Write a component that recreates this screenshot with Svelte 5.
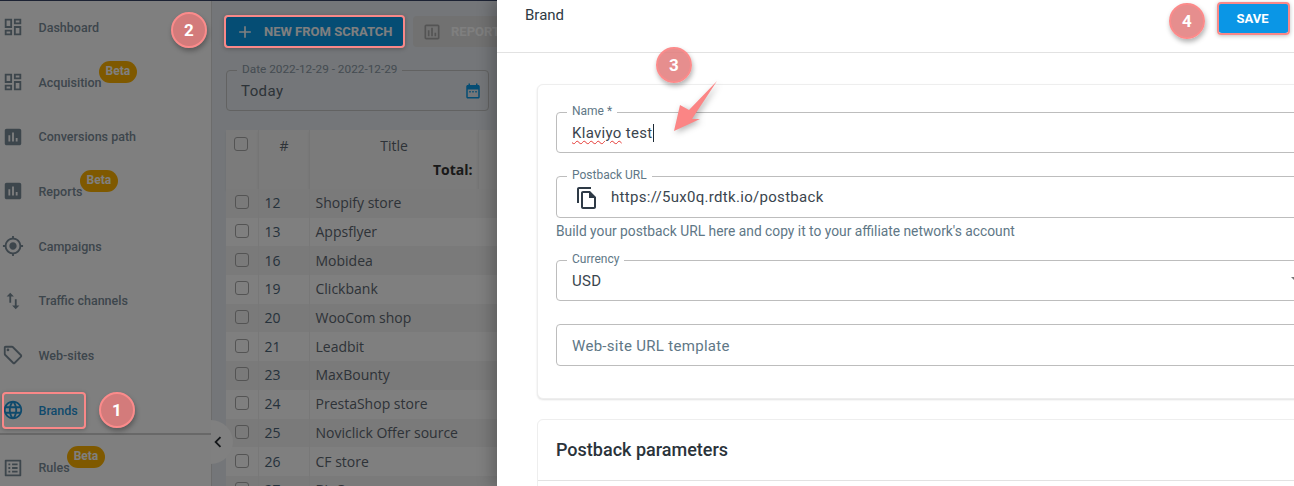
<script lang="ts">
	const icons = {
		dashboard:
			'M19 5v2h-4V5h4M9 5v6H5V5h4m10 8v6h-4v-6h4M9 17v2H5v-2h4M21 3h-8v6h8V3zM11 3H3v10h8V3zm10 8h-8v10h8V11zm-10 4H3v6h8v-6z',
		assessment:
			'M19 3H5c-1.1 0-2 .9-2 2v14c0 1.1.9 2 2 2h14c1.1 0 2-.9 2-2V5c0-1.1-.9-2-2-2zM9 17H7v-7h2v7zm4 0h-2V7h2v10zm4 0h-2v-4h2v4z',
		gps: 'M12 8c-2.21 0-4 1.79-4 4s1.79 4 4 4 4-1.79 4-4-1.79-4-4-4zm8.94 3c-.46-4.17-3.77-7.48-7.94-7.94V1h-2v2.06C6.83 3.52 3.52 6.83 3.06 11H1v2h2.06c.46 4.17 3.77 7.48 7.94 7.94V23h2v-2.06c4.17-.46 7.48-3.77 7.94-7.94H23v-2h-2.06zM12 19c-3.87 0-7-3.13-7-7s3.13-7 7-7 7 3.13 7 7-3.13 7-7 7z',
		swap: 'M16 17.01V10h-2v7.01h-3L15 21l4-3.99h-3zM9 3L5 6.99h3V14h2V6.99h3L9 3z',
		tag: 'M21.41 11.58l-9-9C12.05 2.22 11.55 2 11 2H4c-1.1 0-2 .9-2 2v7c0 .55.22 1.05.59 1.42l9 9c.36.36.86.58 1.41.58s1.05-.22 1.41-.59l7-7c.37-.36.59-.86.59-1.41s-.23-1.06-.59-1.42zM13 20.01L4 11V4h7v-.01l9 9-7 7.02zM6.5 5A1.5 1.5 0 1 0 6.5 8 1.5 1.5 0 1 0 6.5 5z',
		globe:
			'M11.99 2C6.47 2 2 6.48 2 12s4.47 10 9.99 10C17.52 22 22 17.52 22 12S17.52 2 11.99 2zm6.93 6h-2.95c-.32-1.25-.78-2.45-1.38-3.56 1.84.63 3.37 1.91 4.33 3.56zM12 4.04c.83 1.2 1.48 2.53 1.91 3.96h-3.82c.43-1.43 1.08-2.76 1.91-3.96zM4.26 14C4.1 13.36 4 12.69 4 12s.1-1.36.26-2h3.38c-.08.66-.14 1.32-.14 2 0 .68.06 1.34.14 2H4.26zm.82 2h2.95c.32 1.25.78 2.45 1.38 3.56-1.84-.63-3.37-1.9-4.33-3.56zm2.95-8H5.08c.96-1.66 2.49-2.93 4.33-3.56C8.81 5.55 8.35 6.75 8.03 8zM12 19.96c-.83-1.2-1.48-2.53-1.91-3.96h3.82c-.43 1.43-1.08 2.76-1.91 3.96zM14.34 14H9.66c-.09-.66-.16-1.32-.16-2 0-.68.07-1.35.16-2h4.68c.09.65.16 1.32.16 2 0 .68-.07 1.34-.16 2zm.25 5.56c.6-1.11 1.06-2.31 1.38-3.56h2.95c-.96 1.65-2.49 2.93-4.33 3.56zM16.36 14c.08-.66.14-1.32.14-2 0-.68-.06-1.34-.14-2h3.38c.16.64.26 1.31.26 2s-.1 1.36-.26 2h-3.38z',
		list: 'M19 5v14H5V5h14m1.1-2H3.9c-.5 0-.9.4-.9.9v16.2c0 .4.4.9.9.9h16.2c.4 0 .9-.5.9-.9V3.9c0-.5-.5-.9-.9-.9zM11 7h6v2h-6V7zm0 4h6v2h-6v-2zm0 4h6v2h-6zM7 7h2v2H7zm0 4h2v2H7zm0 4h2v2H7z',
		copy: 'M16 1H4c-1.1 0-2 .9-2 2v14h2V3h12V1zm-1 4H8c-1.1 0-2 .9-2 2v14c0 1.1.9 2 2 2h11c1.1 0 2-.9 2-2V11l-6-6zM8 21V7h6v5h5v9H8z',
		calendar:
			'M19 4h-1V2h-2v2H8V2H6v2H5c-1.11 0-2 .9-2 2v14c0 1.1.89 2 2 2h14c1.1 0 2-.9 2-2V6c0-1.1-.9-2-2-2zm0 16H5V10h14v10zM7 12h2v2H7zm4 0h2v2h-2zm4 0h2v2h-2z',
		add: 'M19 13h-6v6h-2v-6H5v-2h6V5h2v6h6v2z',
		report:
			'M19 3H5c-1.1 0-2 .9-2 2v14c0 1.1.9 2 2 2h14c1.1 0 2-.9 2-2V5c0-1.1-.9-2-2-2zm0 16H5V5h14v14zM7 10h2v7H7zm4-3h2v10h-2zm4 6h2v4h-2z',
		chevron: 'M15.41 7.41L14 6l-6 6 6 6 1.41-1.41L10.83 12z'
	};

	const navItems = [
		{ label: 'Dashboard', icon: icons.dashboard },
		{ label: 'Acquisition', icon: icons.dashboard, beta: true },
		{ label: 'Conversions path', icon: icons.assessment },
		{ label: 'Reports', icon: icons.assessment, beta: true },
		{ label: 'Campaigns', icon: icons.gps },
		{ label: 'Traffic channels', icon: icons.swap },
		{ label: 'Web-sites', icon: icons.tag },
		{ label: 'Brands', icon: icons.globe, active: true },
		{ label: 'Rules', icon: icons.list, beta: true }
	];

	const rows = [
		[12, 'Shopify store'],
		[13, 'Appsflyer'],
		[16, 'Mobidea'],
		[19, 'Clickbank'],
		[20, 'WooCom shop'],
		[21, 'Leadbit'],
		[23, 'MaxBounty'],
		[24, 'PrestaShop store'],
		[25, 'Noviclick Offer source'],
		[26, 'CF store'],
		[27, 'BigCommerce']
	];

	const badges = [
		{ n: 1, cls: 'b1' },
		{ n: 2, cls: 'b2' },
		{ n: 3, cls: 'b3' },
		{ n: 4, cls: 'b4' }
	];
</script>

{#snippet icon(d, cls = '')}
	<svg class="icon {cls}" viewBox="0 0 24 24" aria-hidden="true"><path {d} /></svg>
{/snippet}

<div class="page">
	<aside class="sidebar">
		{#each navItems as item}
			<div class="nav-item" class:active={item.active}>
				{@render icon(item.icon, 'nav-icon')}
				<span class="nav-label">
					{item.label}
					{#if item.beta}<span class="beta">Beta</span>{/if}
				</span>
			</div>
		{/each}
	</aside>

	<main class="main">
		<div class="toolbar">
			<button class="btn btn-primary">{@render icon(icons.add, 'btn-icon')}New from scratch</button>
			<button class="btn btn-disabled">{@render icon(icons.report, 'btn-icon')}Reports</button>
		</div>

		<fieldset class="date-field">
			<legend>Date 2022-12-29 - 2022-12-29</legend>
			<span class="date-value">Today</span>
			{@render icon(icons.calendar, 'date-icon')}
		</fieldset>

		<table class="grid">
			<thead>
				<tr>
					<th class="col-check"><span class="check"></span></th>
					<th class="col-id">#</th>
					<th class="col-title">
						<div>Title</div>
						<div class="total">Total:</div>
					</th>
					<th></th>
				</tr>
			</thead>
			<tbody>
				{#each rows as [id, title]}
					<tr>
						<td class="col-check"><span class="check"></span></td>
						<td class="col-id-val">{id}</td>
						<td>{title}</td>
						<td></td>
					</tr>
				{/each}
			</tbody>
		</table>
	</main>

	<div class="scrim"></div>

	<button class="collapse">{@render icon(icons.chevron, 'collapse-icon')}</button>

	<section class="drawer">
		<header class="drawer-head">
			<span class="drawer-title">Brand</span>
			<button class="save">Save</button>
		</header>

		<div class="drawer-body">
			<div class="card form-card">
				<fieldset class="field">
					<legend>Name *</legend>
					<span class="value"><span class="misspelt">Klaviyo</span> test<span class="caret"></span></span>
				</fieldset>

				<fieldset class="field url-field">
					<legend>Postback URL</legend>
					{@render icon(icons.copy, 'copy-icon')}
					<span class="value url">https://5ux0q.rdtk.io/postback</span>
				</fieldset>
				<p class="helper">Build your postback URL here and copy it to your affiliate network's account</p>

				<fieldset class="field">
					<legend>Currency</legend>
					<span class="value">USD</span>
					<span class="select-arrow"></span>
				</fieldset>

				<div class="field plain">Web-site URL template</div>
			</div>

			<div class="card params-card">
				<h2>Postback parameters</h2>
			</div>
		</div>
	</section>

	<!-- annotations drawn on top of the screenshot -->
	<div class="mark mark-brands"></div>
	<div class="mark mark-new"></div>
	<div class="mark mark-save"></div>
	{#each badges as b}
		<div class="badge {b.cls}">{b.n}</div>
	{/each}
	<svg class="arrow" viewBox="0 0 60 60" aria-hidden="true">
		<polygon points="50,3 22,32 13,27 7,53 33,41 25,41" />
	</svg>
</div>

<style>
	:global(body) {
		margin: 0;
		font-family: Roboto, 'Liberation Sans', sans-serif;
		background: #fff;
	}

	.page {
		position: relative;
		display: flex;
		width: 1294px;
		height: 486px;
		overflow: hidden;
		background: #e8edf2;
	}

	.icon {
		display: block;
		fill: currentColor;
		flex-shrink: 0;
	}

	/* sidebar */
	.sidebar {
		width: 211px;
		flex-shrink: 0;
		background: #fff;
		border-right: 1px solid #d8d8d8;
		box-sizing: content-box;
	}

	.nav-item {
		position: relative;
		display: flex;
		align-items: center;
		height: 54.7px;
		padding-left: 2px;
		color: #7b8c99;
		font-size: 12.5px;
		font-weight: 500;
	}

	.nav-item:last-child {
		padding-top: 3px;
	}

	:global(.nav-icon) {
		width: 22px;
		height: 22px;
		margin-right: 14.5px;
	}

	.nav-item.active {
		color: #1f94d8;
	}

	.nav-item.active::after {
		content: '';
		position: absolute;
		left: 0;
		right: 0;
		bottom: 3px;
		height: 2px;
		background: #d0d0d0;
	}

	.nav-label {
		position: relative;
	}

	.beta {
		position: absolute;
		left: 100%;
		top: -14px;
		margin-left: -3px;
		padding: 0 7px;
		height: 22px;
		line-height: 21px;
		border-radius: 11px;
		background: #ffb300;
		color: #fff;
		font-weight: 700;
		font-size: 12px;
	}

	/* dimmed main area */
	.main {
		flex: 1;
		padding: 16px 14px 0;
		min-width: 0;
	}

	.toolbar {
		display: flex;
		gap: 9px;
		height: 31px;
	}

	.btn {
		display: flex;
		align-items: center;
		height: 31px;
		padding: 0 9px;
		border: 0;
		border-radius: 4px;
		font-family: inherit;
		font-size: 13px;
		font-weight: 700;
		text-transform: uppercase;
		white-space: nowrap;
	}

	:global(.btn-icon) {
		width: 20px;
		height: 20px;
		margin-right: 9px;
	}

	.btn-primary {
		width: 178px;
		background: #0a9ae8;
		color: #fff;
		flex-shrink: 0;
	}

	.btn-disabled {
		width: 150px;
		background: #e2e2e2;
		color: #fff;
		flex-shrink: 0;
	}

	.btn-disabled :global(.btn-icon) {
		color: #a8a8a8;
	}

	.date-field {
		position: relative;
		display: flex;
		align-items: center;
		box-sizing: border-box;
		width: 263px;
		height: 47px;
		margin: 17px 0 0;
		padding: 0 14px;
		border: 1px solid #c4c4c4;
		border-radius: 4px;
		font-size: 15px;
		color: #5a6670;
	}

	.date-field legend {
		position: relative;
		top: -1px;
		padding: 0 5px;
		margin-left: -4px;
		font-size: 11.8px;
		line-height: 12px;
		color: #8a98a4;
	}

	.date-value {
		letter-spacing: 0.4px;
		margin-top: -5px;
	}

	:global(.date-icon) {
		position: absolute;
		right: 6px;
		top: 6px;
		width: 18px;
		height: 18px;
		color: #0a9ae8;
	}

	.grid {
		margin-top: 19px;
		border-collapse: collapse;
		table-layout: fixed;
		width: 400px;
		font-family: 'Open Sans', sans-serif;
		font-size: 14px;
		color: #5c6670;
		background: #fff;
	}

	.grid th {
		height: 59px;
		box-sizing: border-box;
		vertical-align: top;
		padding: 6px 5px 0 6px;
		font-weight: 400;
		background: #f6f6f6;
		border-right: 1px solid #eaeaea;
		box-shadow: 0 2px 2px rgba(0, 0, 0, 0.08);
	}

	.col-check {
		width: 32px;
	}

	.col-id {
		width: 51px;
	}

	.col-title {
		width: 169px;
	}

	.total {
		margin-top: 5px;
		text-align: right;
		font-weight: 700;
		color: #333;
	}

	.grid td {
		height: 28.7px;
		box-sizing: border-box;
		padding: 0 6px;
		line-height: 18px;
		white-space: nowrap;
	}

	.grid td:nth-child(-n + 2) {
		border-right: 1px solid #f0f0f0;
	}

	.grid td.col-check {
		padding: 0 9px;
	}

	.grid td.col-id-val {
		padding-left: 6px;
		color: #4c6478;
	}

	.grid tbody tr:nth-child(odd) {
		background: #f4f4f4;
	}

	.check {
		display: block;
		width: 14px;
		height: 14px;
		box-sizing: border-box;
		border: 1.5px solid #a8a8a8;
		border-radius: 3px;
		margin: 1px 0 0 2px;
	}

	.grid td .check {
		margin: -2px 0 0;
	}

	.scrim {
		position: absolute;
		inset: 0;
		border-top: 1px solid #1c2233;
		background: rgba(0, 0, 0, 0.5);
	}

	.collapse {
		position: absolute;
		left: 211px;
		top: 420px;
		width: 22px;
		height: 44px;
		padding: 0;
		border: 0;
		border-radius: 0 22px 22px 0;
		background: #808080;
		color: #15181b;
	}

	:global(.collapse-icon) {
		width: 22px;
		height: 22px;
		margin-left: -4px;
	}

	/* drawer */
	.drawer {
		position: absolute;
		left: 497px;
		top: 0;
		width: 900px;
		height: 486px;
		background: #fff;
		box-shadow: -6px 0 14px rgba(0, 0, 0, 0.22);
		color: #2f3a43;
	}

	.drawer-head {
		display: flex;
		align-items: center;
		justify-content: space-between;
		box-sizing: border-box;
		height: 53px;
		padding: 0 28px;
		border-bottom: 1px solid #e2e2e2;
	}

	.drawer-title {
		font-size: 15px;
		margin-top: -22px;
	}

	.save {
		position: absolute;
		left: 721px;
		top: 3px;
		width: 71px;
		height: 30px;
		padding: 0 2px 0 0;
		border: 0;
		border-radius: 4px;
		background: #0a96e6;
		color: #fff;
		font-family: inherit;
		font-size: 13px;
		font-weight: 700;
		text-transform: uppercase;
	}

	.drawer-body {
		padding: 31px 0 0 40px;
	}

	.card {
		width: 800px;
		box-sizing: border-box;
		border: 1px solid #eee;
		border-radius: 6px;
		background: #fff;
	}

	.form-card {
		height: 315px;
		padding: 21px 18px 0;
		box-shadow: 0 1px 2px rgba(0, 0, 0, 0.12);
	}

	.field {
		position: relative;
		display: flex;
		align-items: center;
		box-sizing: border-box;
		height: 47px;
		margin: 0 0 17px;
		padding: 0 15px;
		border: 1px solid #bdbdbd;
		border-radius: 4px;
	}

	.field legend {
		position: relative;
		top: -1px;
		padding: 0 5px;
		margin-left: -5px;
		font-size: 12px;
		line-height: 12px;
		color: #607786;
	}

	.value {
		font-size: 15px;
		letter-spacing: 0.3px;
		color: #3a454e;
		margin-top: -5px;
	}

	.misspelt {
		text-decoration: underline wavy #e53935 1px;
		text-underline-offset: 2px;
	}

	.caret {
		display: inline-block;
		width: 1px;
		height: 18px;
		margin-left: 1px;
		vertical-align: -4px;
		background: #1d2a35;
	}

	.url-field {
		height: 48px;
		margin-bottom: 0;
	}

	:global(.copy-icon) {
		width: 24px;
		height: 24px;
		margin: -4px 12px 0 3px;
		color: #2e3a46;
	}

	.helper {
		margin: 0;
		height: 36px;
		line-height: 26px;
		font-size: 13.8px;
		color: #607786;
	}

	.select-arrow {
		position: absolute;
		right: 16px;
		top: 11px;
		border: 5px solid transparent;
		border-top-color: #757575;
	}

	.plain {
		height: 42px;
		padding-top: 1px;
		font-size: 15px;
		letter-spacing: 0.3px;
		color: #607786;
		margin-top: 23px;
	}

	.params-card {
		margin-top: 20px;
		height: 120px;
	}

	.params-card h2 {
		margin: 0;
		height: 61px;
		box-sizing: border-box;
		padding: 0 18px;
		line-height: 60px;
		font-size: 18px;
		font-weight: 500;
		color: #2a333a;
		border-bottom: 1px solid #e2e2e2;
	}

	/* annotations */
	.mark {
		position: absolute;
		box-sizing: border-box;
		border: 2px solid #f98888;
		border-radius: 4px;
		box-shadow: 0 1px 4px rgba(0, 0, 0, 0.25);
	}

	.mark-brands {
		left: 2px;
		top: 392px;
		width: 84px;
		height: 37px;
	}

	.mark-new {
		left: 224px;
		top: 15px;
		width: 181px;
		height: 33px;
	}

	.mark-save {
		left: 1217px;
		top: 2px;
		width: 73px;
		height: 33px;
	}

	.badge {
		position: absolute;
		width: 36px;
		height: 36px;
		box-sizing: border-box;
		border: 2px solid #fb8b8b;
		border-radius: 50%;
		background: rgba(226, 122, 122, 0.85);
		box-shadow: 1px 3px 5px rgba(0, 0, 0, 0.3);
		color: #fff;
		font-size: 17px;
		font-weight: 700;
		line-height: 32px;
		text-align: center;
	}

	.b1 {
		left: 99px;
		top: 392px;
	}

	.b2 {
		left: 171px;
		top: 12px;
	}

	.b3 {
		left: 656px;
		top: 47px;
	}

	.b4 {
		left: 1169px;
		top: 3px;
	}

	.arrow {
		position: absolute;
		left: 667px;
		top: 78px;
		width: 60px;
		height: 60px;
		filter: drop-shadow(2px 2px 3px rgba(0, 0, 0, 0.3));
	}

	.arrow polygon {
		fill: #fb8585;
	}
</style>
